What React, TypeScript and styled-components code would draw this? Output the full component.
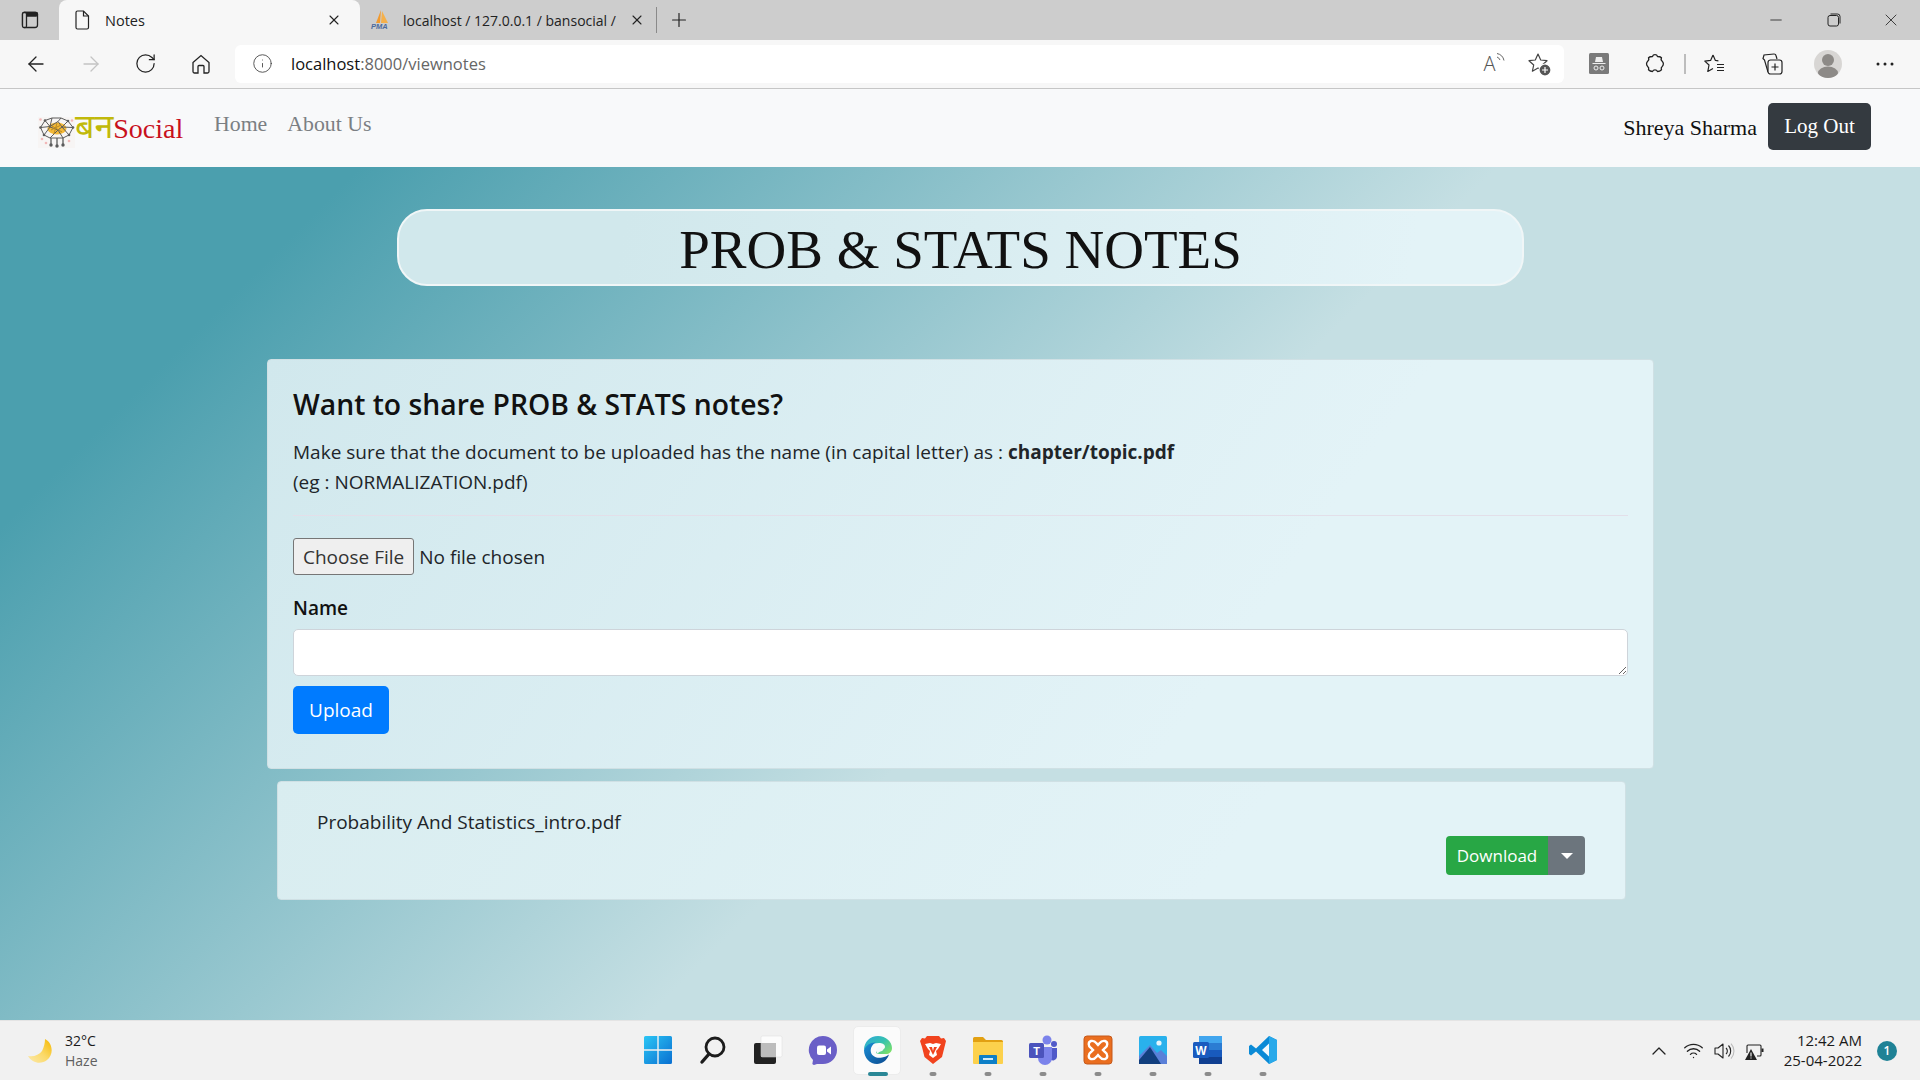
import React from 'react'
import styled, { createGlobalStyle } from 'styled-components'
import { ArrowLeft, ArrowRight, RotateCw, Info, Minus, X, Plus, ChevronUp, Wifi } from 'lucide-react'

const SANS = `"Open Sans", "Noto Sans", sans-serif`
const SERIF = `"Liberation Serif", serif`

const GlobalStyle = createGlobalStyle`
    html, body {
        margin: 0;
        padding: 0;
        overflow: hidden;
    }
    body {
        font-family: ${SANS};
        color: #212529;
    }
    * {
        box-sizing: border-box;
    }
`

const App: React.FC = () => {
    return (
        <StyledWindow>
            <GlobalStyle />
            <TabStrip />
            <Toolbar />
            <SiteNav />
            <StyledMain>
                <StyledTitle>PROB &amp; STATS NOTES</StyledTitle>
                <StyledShareCard>
                    <StyledHeading>Want to share PROB &amp; STATS notes?</StyledHeading>
                    <StyledHint>
                        Make sure that the document to be uploaded has the name (in capital letter) as : <b>chapter/topic.pdf</b>
                        <br />
                        (eg : NORMALIZATION.pdf)
                    </StyledHint>
                    <StyledRule />
                    <StyledFile type="file" />
                    <StyledLabel>Name</StyledLabel>
                    <StyledTextarea />
                    <StyledUpload>Upload</StyledUpload>
                </StyledShareCard>
                <StyledNoteCard>
                    <StyledNoteName>Probability And Statistics_intro.pdf</StyledNoteName>
                    <StyledNoteActions>
                        <StyledDownload>Download</StyledDownload>
                        <StyledCaretButton><StyledCaret /></StyledCaretButton>
                    </StyledNoteActions>
                </StyledNoteCard>
            </StyledMain>
            <Taskbar />
        </StyledWindow>
    )
}

const TabStrip: React.FC = () => (
    <StyledTabStrip>
        <StyledTabAction>
            <svg width="18" height="18" viewBox="0 0 18 18" fill="none" stroke="#222" strokeWidth="1.3">
                <rect x="1.5" y="1.5" width="15" height="15" rx="2.5" />
                <rect x="1.5" y="1.5" width="15" height="3.5" rx="1.5" fill="#222" />
                <rect x="1.5" y="1.5" width="4" height="15" rx="1.5" fill="#cdcdcd" />
            </svg>
        </StyledTabAction>
        <StyledActiveTab>
            <svg width="16" height="20" viewBox="0 0 16 20" fill="none" stroke="#222" strokeWidth="1.2">
                <path d="M2 2.5a1.5 1.5 0 0 1 1.5-1.5h6L14.500 6v11.500a1.500 1.500 0 0 1-1.500 1.500h-9.500a1.500 1.500 0 0 1-1.500-1.500z" />
                <path d="M9.500 1v5h5" />
            </svg>
            <StyledTabLabel>Notes</StyledTabLabel>
            <X size={16} strokeWidth={1.6} color="#222" />
        </StyledActiveTab>
        <StyledTab>
            <svg width="22" height="20" viewBox="0 0 22 20">
                <path d="M11 0 L6 13 L10 13 Z" fill="#f29a2e" />
                <path d="M12 1 L11 13 L18 13 Z" fill="#f5b04a" />
                <text x="1" y="19" fontSize="7.500" fontWeight="700" fontStyle="italic" fill="#4c6a9c" fontFamily="Liberation Sans, sans-serif">PMA</text>
            </svg>
            <StyledInactiveLabel>localhost / 127.0.0.1 / bansocial /</StyledInactiveLabel>
            <X size={16} strokeWidth={1.6} color="#222" />
        </StyledTab>
        <StyledTabDivider />
        <StyledNewTab><Plus size={22} strokeWidth={1.3} color="#222" /></StyledNewTab>
        <StyledWindowControls>
            <StyledWindowButton><Minus size={18} strokeWidth={1.1} color="#222" /></StyledWindowButton>
            <StyledWindowButton>
                <svg width="14" height="14" viewBox="0 0 14 14" fill="none" stroke="#222" strokeWidth="1">
                    <rect x="1" y="2.500" width="10.500" height="10.500" rx="2" />
                    <path d="M3.500 1h7a2.500 2.500 0 0 1 2.500 2.500v7" />
                </svg>
            </StyledWindowButton>
            <StyledWindowButton><X size={20} strokeWidth={1} color="#222" /></StyledWindowButton>
        </StyledWindowControls>
    </StyledTabStrip>
)

const Toolbar: React.FC = () => (
    <StyledToolbar>
        <StyledToolButton><ArrowLeft size={24} strokeWidth={1.3} color="#222" /></StyledToolButton>
        <StyledToolButton><ArrowRight size={24} strokeWidth={1.3} color="#c4c4c4" /></StyledToolButton>
        <StyledToolButton><RotateCw size={23} strokeWidth={1.3} color="#222" /></StyledToolButton>
        <StyledToolButton>
            <svg width="22" height="22" viewBox="0 0 22 22" fill="none" stroke="#222" strokeWidth="1.3">
                <path d="M3 9.500 11 2.500l8 7v9a1.500 1.500 0 0 1-1.500 1.500H14v-6.500a1 1 0 0 0-1-1H9a1 1 0 0 0-1 1V20H4.500A1.500 1.500 0 0 1 3 18.500z" />
            </svg>
        </StyledToolButton>
        <StyledAddress>
            <Info size={21} strokeWidth={1} color="#444" />
            <StyledUrl>localhost<span>:8000/viewnotes</span></StyledUrl>
            <StyledAddressEnd>
                <StyledReadAloud>
                    A
                    <svg width="9" height="12" viewBox="0 0 9 12" fill="none" stroke="#666" strokeWidth="1">
                        <path d="M1 5a5 5 0 0 1 3 3M1 1.500a9 9 0 0 1 7 7" />
                    </svg>
                </StyledReadAloud>
                <svg width="24" height="24" viewBox="0 0 24 24" fill="none" stroke="#444" strokeWidth="1.2">
                    <path d="M11 2l2.700 6 6.300.7-4.700 4.300 1.300 6.200L11 16.100l-5.600 3.100 1.300-6.200L2 8.700 8.300 8z" strokeLinejoin="round" />
                    <circle cx="18" cy="18" r="6" fill="#555" stroke="#fff" strokeWidth="1.200" />
                    <path d="M18 15v6M15 18h6" stroke="#fff" />
                </svg>
            </StyledAddressEnd>
        </StyledAddress>
        <StyledRightTool>
            <svg width="20" height="21" viewBox="0 0 20 21">
                <rect width="20" height="21" rx="1.500" fill="#7a7a7a" />
                <path d="M6 9l1-5h6l1 5zM3.500 10h13v1h-13z" fill="#eee" />
                <circle cx="7" cy="15" r="2" fill="none" stroke="#eee" />
                <circle cx="13" cy="15" r="2" fill="none" stroke="#eee" />
            </svg>
        </StyledRightTool>
        <StyledRightTool>
            <svg width="22" height="22" viewBox="0 0 22 22" fill="none" stroke="#222" strokeWidth="1.3">
                <path d="M8.500 3.500a2.600 2.600 0 0 1 5 0c1.500 0 3 .3 4 1.300-.6 1.200-.3 2.700.7 3.400a3.600 3.600 0 0 1 0 5.300c-1 .8-1.200 2.200-.7 3.300-1 1-2.500 1.700-4 1.700a2.800 2.800 0 0 0-5 0c-1.500 0-3-.6-4-1.700.5-1.200.2-2.500-.8-3.300a3.600 3.600 0 0 1 0-5.300c1-.7 1.300-2.200.8-3.400 1-1 2.500-1.300 4-1.300z" strokeLinejoin="round" />
            </svg>
        </StyledRightTool>
        <StyledToolDivider />
        <StyledRightTool>
            <svg width="24" height="24" viewBox="0 0 24 24" fill="none" stroke="#222" strokeWidth="1.2">
                <path d="M10 3l2.400 5.400 3 .4M10 3 7.600 8.400l-5.800.7L6 13l-1.200 6.500L10 16.500" strokeLinejoin="round" />
                <path d="M14 12.500h7M14 15.500h7M14 18.500h7" />
            </svg>
        </StyledRightTool>
        <StyledRightTool>
            <svg width="24" height="24" viewBox="0 0 24 24" fill="none" stroke="#222" strokeWidth="1.2">
                <path d="M8 20 4.500 8 3 6.500l1-3.500L14 2a2 2 0 0 1 2 1.500L17 7" />
                <rect x="8" y="8" width="14" height="14" rx="2.500" fill="#f7f7f7" />
                <path d="M15 11.500v7M11.500 15h7" />
            </svg>
        </StyledRightTool>
        <StyledRightTool>
            <StyledAvatar>
                <svg width="28" height="28" viewBox="0 0 28 28">
                    <circle cx="14" cy="10" r="6" fill="#8d8a87" />
                    <ellipse cx="14" cy="23" rx="10" ry="6.500" fill="#8d8a87" />
                </svg>
            </StyledAvatar>
        </StyledRightTool>
        <StyledRightTool>
            <svg width="18" height="4" viewBox="0 0 18 4" fill="#222">
                <circle cx="2" cy="2" r="1.500" /><circle cx="9" cy="2" r="1.500" /><circle cx="16" cy="2" r="1.500" />
            </svg>
        </StyledRightTool>
    </StyledToolbar>
)

const SiteLogo: React.FC = () => (
    <svg width="37" height="31" viewBox="0 0 37 31">
        <rect width="37" height="31" fill="#f7f5f4" />
        <g fill="#f2b8b8">
            <circle cx="2.500" cy="2.500" r="1.300" /><circle cx="34" cy="3.500" r="1.300" /><circle cx="4" cy="22" r="1.300" /><circle cx="8" cy="26" r="1.300" /><circle cx="31" cy="24" r="1.300" />
        </g>
        <ellipse cx="19" cy="11.500" rx="9.500" ry="6" fill="#f4b938" />
        <g fill="none" stroke="#5c5c5c" strokeWidth="1">
            <path d="M2.500 10.500 7 3.500 14 1h9l7 3 5 6.500-4 7.500-6 3H12l-6-3z" />
            <path d="M7 3.500l5 6-9.500 1M30 4l-6 6 11 .5M14 1l-2 8.500 8-5 4 5.500M23 1l-3 3.500M6 18l6-8 8 3 4-3 7 8M12 21l8-8 5 8" />
        </g>
        <path d="M14 9l10 6M19 6l-3 11M13 13l10-5" fill="none" stroke="#b98a24" strokeWidth="1" />
        <path d="M13 21v7M19 21v8M25 21v7" fill="none" stroke="#5c5c5c" strokeWidth="1.300" />
        <g fill="#5c5c5c">
            <circle cx="13" cy="28" r="1.700" /><circle cx="19" cy="29" r="1.700" /><circle cx="25" cy="28" r="1.700" />
            <circle cx="7" cy="3.500" r="1.300" /><circle cx="30" cy="4" r="1.300" /><circle cx="2.500" cy="10.500" r="1.300" /><circle cx="35" cy="10.500" r="1.300" /><circle cx="6" cy="18" r="1.300" /><circle cx="31" cy="18" r="1.300" />
        </g>
    </svg>
)

const SiteNav: React.FC = () => (
    <StyledNav>
        <StyledBrand>
            <SiteLogo />
            <StyledBrandText>
                <StyledBrandHindi>बन</StyledBrandHindi>
                <StyledBrandSocial>Social</StyledBrandSocial>
            </StyledBrandText>
        </StyledBrand>
        <StyledNavLink>Home</StyledNavLink>
        <StyledNavLink>About Us</StyledNavLink>
        <StyledUser>Shreya Sharma</StyledUser>
        <StyledLogOut>Log Out</StyledLogOut>
    </StyledNav>
)

const Taskbar: React.FC = () => (
    <StyledTaskbar>
        <StyledWeather>
            <svg width="26" height="26" viewBox="0 0 26 26">
                <defs>
                    <linearGradient id="moon" x1="1" y1="0" x2="0" y2="1">
                        <stop offset="0" stopColor="#f5b800" /><stop offset=".5" stopColor="#fbd968" /><stop offset="1" stopColor="#fbe9ac" />
                    </linearGradient>
                </defs>
                <path d="M18 1C26 5 27 17 20 22 14 27 5 25 1 18 7 19 12 17 15 13 17 9 18 5 18 1z" fill="url(#moon)" />
            </svg>
            <StyledWeatherText>
                <span>32°C</span>
                <StyledMuted>Haze</StyledMuted>
            </StyledWeatherText>
        </StyledWeather>
        <StyledApps>
            <AppSlot>
                <svg width="30" height="30" viewBox="0 0 30 30">
                    <defs>
                        <linearGradient id="win" x1="0" y1="0" x2="1" y2="1">
                            <stop offset="0" stopColor="#2bc6f5" /><stop offset="1" stopColor="#0a6fd1" />
                        </linearGradient>
                    </defs>
                    <path d="M1 2.500A1.500 1.500 0 0 1 2.500 1h11.800v13.300H1zM15.700 1h11.800A1.500 1.500 0 0 1 29 2.500v11.800H15.700zM1 15.700h13.300V29H2.500A1.500 1.500 0 0 1 1 27.500zM15.700 15.700H29v11.800a1.500 1.500 0 0 1-1.500 1.500H15.700z" fill="url(#win)" />
                </svg>
            </AppSlot>
            <AppSlot>
                <svg width="30" height="30" viewBox="0 0 30 30" fill="none" stroke="#1c1c1c" strokeLinecap="round">
                    <circle cx="17" cy="12" r="9" strokeWidth="2.800" />
                    <path d="M11 19 4 27" strokeWidth="3.400" />
                </svg>
            </AppSlot>
            <AppSlot>
                <svg width="30" height="30" viewBox="0 0 30 30">
                    <rect x="1" y="8" width="22" height="21" rx="2" fill="#222" />
                    <rect x="8" y="1" width="21" height="21" rx="1.500" fill="#fff" fillOpacity=".75" stroke="#ddd" strokeWidth=".5" />
                    <rect x="8" y="8" width="15" height="14" fill="#bdbdbd" />
                </svg>
            </AppSlot>
            <AppSlot>
                <svg width="30" height="30" viewBox="0 0 30 30">
                    <path d="M15 1a14 14 0 0 1 0 28H9l-3 1c-1 0-2-1-1.500-2L5 25A14 14 0 0 1 15 1z" fill="#6a5fc7" />
                    <rect x="9" y="10.500" width="9" height="9.500" rx="2" fill="#fff" />
                    <path d="M19 14.500l4-3v8l-4-3z" fill="#fff" />
                </svg>
            </AppSlot>
            <AppSlot $active>
                <svg width="30" height="30" viewBox="0 0 30 30">
                    <defs>
                        <linearGradient id="edgeA" x1="0" y1="0" x2="1" y2=".8">
                            <stop offset="0" stopColor="#2fa8dc" /><stop offset=".55" stopColor="#35c1b0" /><stop offset="1" stopColor="#7be06a" />
                        </linearGradient>
                        <linearGradient id="edgeB" x1="0" y1="0" x2="1" y2="1">
                            <stop offset="0" stopColor="#1a8fd6" /><stop offset="1" stopColor="#0c4a8f" />
                        </linearGradient>
                    </defs>
                    <path d="M1 15C1 7 7 1 15 1c8 0 14 6 14 12 0 4-3 6-6 6h-7c-2 0-3-1-3-2 0-3 9-1 9-5 0-3-3-4-6-4C9 8 4 11 1 15z" fill="url(#edgeA)" />
                    <path d="M1 15C3 10 8 7 13 7.500c-4 2-6 6-5 10 1 4 6 6 11 5 3-.5 5-1.500 7-3-2 6-7 9.500-12 9.500C7 29 1 23 1 15z" fill="url(#edgeB)" />
                    <path d="M13 15c1-3 4-4 6-3 2 1 2 3 0 4-2 .5-4 1.500-4 2.500-1-.5-2.200-2-2-3.500z" fill="#f4f9fb" />
                </svg>
                <StyledIndicator $active />
            </AppSlot>
            <AppSlot $running>
                <svg width="28" height="30" viewBox="0 0 28 30">
                    <path d="M8 1h12l2 2.500 3-.5 2 3-1.500 6-2.500 10L14 29 5.500 22 3 12 1 6l2-3 3 .5z" fill="#f1431e" />
                    <path d="M6 9l5-1 3 1 3-1 5 1-3 5-2 2 1 4-4 3-4-3 1-4-2-2z" fill="#fff" />
                    <path d="M10 12h3l1 4 1-4h3l-4 8z" fill="#f1431e" />
                </svg>
                <StyledIndicator />
            </AppSlot>
            <AppSlot $running>
                <svg width="30" height="30" viewBox="0 0 30 30">
                    <path d="M0 3.500A1.500 1.500 0 0 1 1.500 2H10l3 3h15.500A1.500 1.500 0 0 1 30 6.500V10H0z" fill="#e2a012" />
                    <path d="M0 7h30v21a1 1 0 0 1-1 1H1a1 1 0 0 1-1-1z" fill="#fcd14c" />
                    <path d="M6 21a1 1 0 0 1 1-1h16a1 1 0 0 1 1 1v8H6z" fill="#0d7fc7" />
                    <rect x="10" y="23" width="10" height="2" fill="#cfeaf8" />
                </svg>
                <StyledIndicator />
            </AppSlot>
            <AppSlot $running>
                <svg width="30" height="30" viewBox="0 0 30 30">
                    <circle cx="19" cy="5" r="4.500" fill="#7b83eb" />
                    <circle cx="26" cy="9" r="3" fill="#5059c9" />
                    <path d="M22 13h7v9a4 4 0 0 1-7 2z" fill="#5059c9" />
                    <path d="M10 12h14v11a7 7 0 0 1-14 0z" fill="#7b83eb" />
                    <rect x="1" y="8" width="15" height="15" rx="1.500" fill="#4b53bc" />
                    <text x="8.500" y="20" textAnchor="middle" fontSize="11" fontWeight="700" fill="#fff" fontFamily="Liberation Sans, sans-serif">T</text>
                </svg>
                <StyledIndicator />
            </AppSlot>
            <AppSlot $running>
                <svg width="30" height="30" viewBox="0 0 30 30">
                    <rect x="1" y="1" width="28" height="28" rx="3" fill="#ea6e1f" stroke="#c5591a" />
                    <path d="M8 6c4-1 5 2 7 4 2-2 3-5 7-4 3 1 3 5 0 7l-2 2 2 2c3 2 3 6 0 7-4 1-5-2-7-4-2 2-3 5-7 4-3-1-3-5 0-7l2-2-2-2c-3-2-3-6 0-7z" fill="none" stroke="#fff" strokeWidth="2.400" />
                </svg>
                <StyledIndicator />
            </AppSlot>
            <AppSlot $running>
                <svg width="30" height="30" viewBox="0 0 30 30">
                    <rect x="1" y="1" width="28" height="28" rx="1.500" fill="#29b1ec" />
                    <circle cx="21" cy="8" r="2.600" fill="#e6f6fd" />
                    <path d="M1 21 12 10l7 8 4-3 6 6v8H1z" fill="#5a80d8" />
                    <path d="M1 25 12 12l11 17H1z" fill="#123f7e" />
                </svg>
                <StyledIndicator />
            </AppSlot>
            <AppSlot $running>
                <svg width="30" height="30" viewBox="0 0 30 30">
                    <rect x="6" y="1" width="23" height="7.500" fill="#41a5ee" />
                    <rect x="6" y="8" width="23" height="7.500" fill="#2b7cd3" />
                    <rect x="6" y="15" width="23" height="7.500" fill="#185abd" />
                    <rect x="6" y="22" width="23" height="7" fill="#103f91" />
                    <rect x="0" y="7" width="16" height="16" rx="1.500" fill="#1a5bbf" />
                    <text x="8" y="19.500" textAnchor="middle" fontSize="12" fontWeight="700" fill="#fff" fontFamily="Liberation Sans, sans-serif">W</text>
                </svg>
                <StyledIndicator />
            </AppSlot>
            <AppSlot $running>
                <svg width="30" height="30" viewBox="0 0 30 30">
                    <path d="M21 1 29 5v20l-8 4-13-12.500L3 20.500 1 19v-8l2-1.500 5 4z" fill="#0a8ad6" />
                    <path d="M21 1 29 5v20l-8 4z" fill="#29a9ea" />
                    <path d="M21 8.500v13L14 15z" fill="#fff" fillOpacity=".95" />
                </svg>
                <StyledIndicator />
            </AppSlot>
        </StyledApps>
        <StyledTray>
            <StyledChevronIcon><ChevronUp size={24} strokeWidth={1.3} color="#222" /></StyledChevronIcon>
            <StyledTrayIcon><Wifi size={21} strokeWidth={1.5} color="#222" /></StyledTrayIcon>
            <StyledTrayIcon>
                <svg width="22" height="20" viewBox="0 0 22 20" fill="none" stroke="#222" strokeWidth="1.1">
                    <path d="M2 7h3l5-4v14l-5-4H2z" strokeLinejoin="round" />
                    <path d="M13 7a4 4 0 0 1 0 6M15.500 4.500a8 8 0 0 1 0 11" />
                    <path d="M18 2.500a11 11 0 0 1 0 15" stroke="#bbb" />
                </svg>
            </StyledTrayIcon>
            <StyledTrayIcon>
                <svg width="22" height="20" viewBox="0 0 22 20" fill="none" stroke="#222" strokeWidth="1.1">
                    <path d="M3 12V5a1 1 0 0 1 1-1h12a1 1 0 0 1 1 1v9a1 1 0 0 1-1 1h-3" />
                    <rect x="17.500" y="7.500" width="2" height="3.500" fill="#222" stroke="none" />
                    <path d="M7 8 1 19h12z" fill="#222" stroke="none" />
                    <path d="M7 11.500v4M7 16.500v1" stroke="#fff" />
                </svg>
            </StyledTrayIcon>
            <StyledClock>
                <span>12:42 AM</span>
                <span>25-04-2022</span>
            </StyledClock>
            <StyledBadge>1</StyledBadge>
        </StyledTray>
    </StyledTaskbar>
)

const AppSlot: React.FC<{ $active?: boolean, $running?: boolean, children: React.ReactNode }> = ({ $active, children }) => (
    <StyledAppSlot>
        {$active ? <StyledActiveTile /> : null}
        <StyledAppIcon>{children}</StyledAppIcon>
    </StyledAppSlot>
)

const StyledWindow = styled.div`
    width: 1920px;
    height: 1080px;
    display: flex;
    flex-direction: column;
    overflow: hidden;
`

const StyledTabStrip = styled.div`
    height: 40px;
    flex: none;
    background: #cdcdcd;
    display: flex;
    align-items: center;
    font-size: 14.500px;
    color: #222;
`

const StyledTabAction = styled.div`
    width: 59px;
    height: 40px;
    display: flex;
    align-items: center;
    justify-content: center;
`

const StyledTab = styled.div`
    width: 296px;
    height: 40px;
    padding: 0 11px 0 10px;
    display: flex;
    align-items: center;
    gap: 11px;
`

const StyledActiveTab = styled(StyledTab)`
    width: 301px;
    background: #f7f7f7;
    border-radius: 8px 8px 0 0;
    padding: 0 18px 0 15px;
    gap: 15px;
`

const StyledTabLabel = styled.span`
    flex: 1;
    white-space: nowrap;
    overflow: hidden;
`

const StyledInactiveLabel = styled(StyledTabLabel)`
    font-size: 14px;
`

const StyledTabDivider = styled.div`
    width: 1px;
    height: 26px;
    background: #8a8a8a;
`

const StyledNewTab = styled.div`
    width: 44px;
    display: flex;
    justify-content: center;
`

const StyledWindowControls = styled.div`
    margin-left: auto;
    display: flex;
`

const StyledWindowButton = styled.div`
    width: 57.500px;
    height: 40px;
    display: flex;
    align-items: center;
    justify-content: center;
`

const StyledToolbar = styled.div`
    height: 49px;
    flex: none;
    padding: 0 7px 1px 8px;
    background: #f7f7f7;
    border-bottom: 1px solid #c6c6c6;
    display: flex;
    align-items: center;
`

const StyledToolButton = styled.div`
    width: 55px;
    height: 38px;
    flex: none;
    display: flex;
    align-items: center;
    justify-content: center;
`

const StyledRightTool = styled(StyledToolButton)`
    width: 56.500px;
`

const StyledAddress = styled.div`
    flex: 1;
    height: 38px;
    margin: 0 7px 0 7px;
    padding: 0 13px 0 17px;
    background: #fff;
    border-radius: 6px;
    display: flex;
    align-items: center;
    gap: 18px;
`

const StyledUrl = styled.div`
    font-size: 16.500px;
    color: #111;
    span {
        color: #666;
    }
`

const StyledAddressEnd = styled.div`
    margin-left: auto;
    display: flex;
    align-items: center;
    gap: 22px;
`

const StyledReadAloud = styled.span`
    display: flex;
    align-items: flex-start;
    font-size: 20px;
    font-weight: 300;
    line-height: 24px;
    color: #555;
`

const StyledToolDivider = styled.div`
    width: 2px;
    height: 20px;
    margin: 0 .75px;
    background: #bdbdbd;
`

const StyledAvatar = styled.div`
    width: 28px;
    height: 28px;
    border-radius: 50%;
    overflow: hidden;
    background: #d8d6d4;
`

const StyledNav = styled.nav`
    height: 78px;
    flex: none;
    padding: 0 49px 0 38px;
    background: #f8f9fa;
    display: flex;
    align-items: center;
`

const StyledBrand = styled.div`
    width: 176px;
    display: flex;
    align-items: flex-end;
    font-family: ${SERIF};
`

const StyledBrandText = styled.div`
    display: flex;
    align-items: baseline;
    margin-bottom: 3px;
`

const StyledBrandHindi = styled.span`
    font-family: "Noto Sans", "Noto Sans Devanagari", "Lohit Devanagari", sans-serif;
    font-size: 34px;
    line-height: 32px;
    color: #c1b90a;
`

const StyledBrandSocial = styled.span`
    font-size: 28px;
    line-height: 32px;
    color: #c8101c;
`

const StyledNavLink = styled.a`
    margin-right: 20px;
    margin-top: -8px;
    font-family: ${SERIF};
    font-size: 21.800px;
    color: #7b7f83;
`

const StyledUser = styled.span`
    margin-left: auto;
    margin-right: 11px;
    font-family: ${SERIF};
    font-size: 22px;
    color: #111;
`

const StyledLogOut = styled.button`
    width: 103px;
    height: 47px;
    margin-bottom: 3px;
    padding: 0;
    border: none;
    border-radius: 5px;
    background: #343a40;
    color: #fff;
    font-family: ${SERIF};
    font-size: 21px;
`

const StyledMain = styled.main`
    flex: 1;
    min-height: 0;
    padding-top: 42px;
    display: flex;
    flex-direction: column;
    background: linear-gradient(135deg, #4b9fae 13%, #c5dfe3 54%);
`

const StyledTitle = styled.h1`
    width: 1127px;
    height: 77px;
    margin: 0 0 73px 397px;
    border: 2px solid #f0f6f7;
    border-radius: 30px;
    background: linear-gradient(100deg, #d1e8ec 20%, #e3f3f7 90%);
    text-align: center;
    font-family: ${SERIF};
    font-size: 55px;
    font-weight: 400;
    line-height: 78px;
    color: #111;
`

const StyledShareCard = styled.section`
    width: 1387px;
    height: 410px;
    margin-left: 267px;
    padding: 26px 25px 0 25px;
    border: 1px solid #cfe0e4;
    border-radius: 4px;
    background: linear-gradient(125deg, #d1e8ed 0%, #e3f3f7 70%);
    display: flex;
    flex-direction: column;
    align-items: flex-start;
`

const StyledHeading = styled.h2`
    margin: 0 0 15px;
    font-size: 28.300px;
    font-weight: 600;
    line-height: 36px;
    color: #111;
`

const StyledHint = styled.p`
    margin: 0;
    font-size: 19px;
    line-height: 30px;
    color: #212529;
    b {
        font-weight: 700;
    }
`

const StyledRule = styled.hr`
    width: 100%;
    margin: 18px 0 22px;
    border: none;
    border-top: 1px solid #e3dfe9;
`

const StyledFile = styled.input`
    height: 38px;
    font-family: ${SANS};
    font-size: 19px;
    color: #212529;

    &::file-selector-button {
        height: 37px;
        margin-right: 5px;
        padding: 0 9px;
        border: 1px solid #767676;
        border-radius: 3px;
        background: #efefef;
        font-family: ${SANS};
        font-size: 19px;
        color: #333;
    }
`

const StyledLabel = styled.label`
    margin-top: 19px;
    margin-bottom: 7px;
    font-size: 19px;
    font-weight: 600;
    line-height: 27px;
    color: #111;
`

const StyledTextarea = styled.textarea`
    width: 100%;
    height: 47px;
    flex: none;
    border: 1px solid #ced4da;
    border-radius: 5px;
    background: #fff;
    display: block;
    resize: vertical;
`

const StyledUpload = styled.button`
    width: 96px;
    height: 48px;
    margin-top: 10px;
    border: none;
    border-radius: 5px;
    background: #007bff;
    color: #fff;
    font-family: ${SANS};
    font-size: 19px;
`

const StyledNoteCard = styled.section`
    width: 1349px;
    height: 119px;
    margin: 12px 0 0 277px;
    padding: 27px 40px 0 39px;
    border: 1px solid #cfe0e4;
    border-radius: 4px;
    background: linear-gradient(125deg, #d9edf0 0%, #e3f3f7 70%);
    display: flex;
    flex-direction: column;
`

const StyledNoteName = styled.div`
    font-size: 19px;
    line-height: 27px;
    color: #212529;
`

const StyledNoteActions = styled.div`
    margin-top: 0;
    align-self: flex-end;
    display: flex;
`

const StyledDownload = styled.button`
    width: 102px;
    height: 39px;
    padding: 0;
    border: none;
    border-radius: 4px 0 0 4px;
    background: #28a745;
    color: #fff;
    font-family: ${SANS};
    font-size: 17px;
`

const StyledCaretButton = styled.button`
    width: 37px;
    height: 39px;
    padding: 0;
    border: none;
    border-radius: 0 4px 4px 0;
    background: #6c757d;
    display: flex;
    align-items: center;
    justify-content: center;
`

const StyledCaret = styled.span`
    width: 0;
    height: 0;
    border-top: 6px solid #fff;
    border-left: 6px solid transparent;
    border-right: 6px solid transparent;
`

const StyledTaskbar = styled.footer`
    height: 60px;
    flex: none;
    background: #f1f1f1;
    border-top: 1px solid #e4e4e4;
    display: grid;
    grid-template-columns: 1fr auto 1fr;
    align-items: center;
`

const StyledWeather = styled.div`
    padding-left: 27px;
    display: flex;
    align-items: center;
    gap: 12px;
`

const StyledWeatherText = styled.div`
    display: flex;
    flex-direction: column;
    font-size: 14px;
    line-height: 20px;
    color: #1a1a1a;
`

const StyledMuted = styled.span`
    color: #5f5f5f;
`

const StyledApps = styled.div`
    display: flex;
`

const StyledAppSlot = styled.div`
    position: relative;
    width: 55px;
    height: 59px;
    display: flex;
    align-items: center;
    justify-content: center;
`

const StyledActiveTile = styled.div`
    position: absolute;
    left: 3px;
    right: 4px;
    top: 5px;
    bottom: 5px;
    border-radius: 5px;
    background: #fbfbfb;
    border: 1px solid #ececec;
`

const StyledAppIcon = styled.div`
    position: relative;
    display: flex;
    margin-top: -2px;
`

const StyledIndicator = styled.div<{ $active?: boolean }>`
    position: absolute;
    left: 50%;
    bottom: -11px;
    width: ${({ $active }) => ($active ? '20px' : '7px')};
    height: 4px;
    border-radius: 2px;
    transform: translateX(-50%);
    background: ${({ $active }) => ($active ? '#2a8796' : '#8c8c8c')};
`

const StyledTray = styled.div`
    padding-right: 23px;
    display: flex;
    align-items: center;
    justify-content: flex-end;
`

const StyledTrayIcon = styled.div`
    width: 31px;
    display: flex;
    justify-content: center;
`

const StyledChevronIcon = styled(StyledTrayIcon)`
    margin-right: 3px;
`

const StyledClock = styled.div`
    margin-top: -2px;
    margin-left: 13px;
    display: flex;
    flex-direction: column;
    align-items: flex-end;
    font-size: 15px;
    line-height: 20px;
    color: #1a1a1a;
`

const StyledBadge = styled.div`
    width: 20px;
    height: 20px;
    margin-left: 15px;
    border-radius: 50%;
    background: #1f8296;
    color: #fff;
    font-size: 12px;
    font-weight: 600;
    line-height: 20px;
    text-align: center;
`

export default App
